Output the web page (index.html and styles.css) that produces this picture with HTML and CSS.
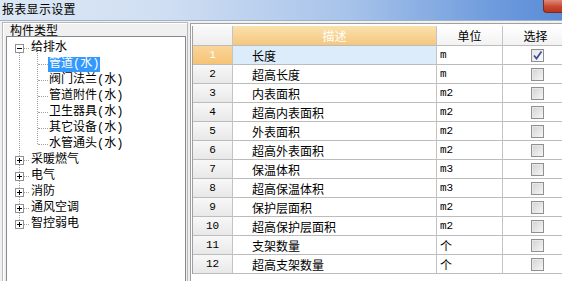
FILE: index.html
```html
<!DOCTYPE html>
<html lang="zh-CN">
<head>
<meta charset="utf-8">
<title>报表显示设置</title>
<link rel="stylesheet" href="styles.css">
</head>
<body>
<div class="window">
  <div class="titlebar">
    <span class="title">报表显示设置</span>
    <span class="close"></span>
  </div>
  <div class="main">
    <div class="left">
      <div class="group">
        <div class="group-title">构件类型</div>
        <div class="tree">
          <ul class="root">
            <li class="node">
              <div class="row">
                <svg class="exp" width="9" height="9" viewBox="0 0 9 9"><rect x="0.5" y="0.5" width="8" height="8" fill="#fff" stroke="#919191"/><path d="M2 4.5h5" stroke="#000"/></svg>
                <span class="hl"></span><span class="label">给排水</span>
              </div>
              <ul class="children">
                <li class="row"><span class="chl"></span><span class="label selected">管道(水)</span></li>
                <li class="row"><span class="chl"></span><span class="label">阀门法兰(水)</span></li>
                <li class="row"><span class="chl"></span><span class="label">管道附件(水)</span></li>
                <li class="row"><span class="chl"></span><span class="label">卫生器具(水)</span></li>
                <li class="row"><span class="chl"></span><span class="label">其它设备(水)</span></li>
                <li class="row"><span class="chl"></span><span class="label">水管通头(水)</span></li>
              </ul>
            </li>
            <li class="row">
              <svg class="exp" width="9" height="9" viewBox="0 0 9 9"><rect x="0.5" y="0.5" width="8" height="8" fill="#fff" stroke="#919191"/><path d="M2 4.5h5M4.5 2v5" stroke="#000"/></svg>
              <span class="hl"></span><span class="label">采暖燃气</span>
            </li>
            <li class="row">
              <svg class="exp" width="9" height="9" viewBox="0 0 9 9"><rect x="0.5" y="0.5" width="8" height="8" fill="#fff" stroke="#919191"/><path d="M2 4.5h5M4.5 2v5" stroke="#000"/></svg>
              <span class="hl"></span><span class="label">电气</span>
            </li>
            <li class="row">
              <svg class="exp" width="9" height="9" viewBox="0 0 9 9"><rect x="0.5" y="0.5" width="8" height="8" fill="#fff" stroke="#919191"/><path d="M2 4.5h5M4.5 2v5" stroke="#000"/></svg>
              <span class="hl"></span><span class="label">消防</span>
            </li>
            <li class="row">
              <svg class="exp" width="9" height="9" viewBox="0 0 9 9"><rect x="0.5" y="0.5" width="8" height="8" fill="#fff" stroke="#919191"/><path d="M2 4.5h5M4.5 2v5" stroke="#000"/></svg>
              <span class="hl"></span><span class="label">通风空调</span>
            </li>
            <li class="row">
              <svg class="exp" width="9" height="9" viewBox="0 0 9 9"><rect x="0.5" y="0.5" width="8" height="8" fill="#fff" stroke="#919191"/><path d="M2 4.5h5M4.5 2v5" stroke="#000"/></svg>
              <span class="hl"></span><span class="label">智控弱电</span>
            </li>
          </ul>
        </div>
      </div>
    </div>
    <div class="right">
      <div class="grid">
        <div class="grow head">
          <div class="c num"></div>
          <div class="c desc active">描述</div>
          <div class="c unit">单位</div>
          <div class="c sel">选择</div>
        </div>
        <div class="grow current">
          <div class="c num">1</div><div class="c desc">长度</div><div class="c unit">m</div>
          <div class="c sel"><span class="cb on"><svg width="11" height="11" viewBox="0 0 11 11"><path d="M2 5.5l2.5 3L9.5 1.5" fill="none" stroke="#3b4c9c" stroke-width="1.7"/></svg></span></div>
        </div>
        <div class="grow"><div class="c num">2</div><div class="c desc">超高长度</div><div class="c unit">m</div><div class="c sel"><span class="cb"></span></div></div>
        <div class="grow"><div class="c num">3</div><div class="c desc">内表面积</div><div class="c unit">m2</div><div class="c sel"><span class="cb"></span></div></div>
        <div class="grow"><div class="c num">4</div><div class="c desc">超高内表面积</div><div class="c unit">m2</div><div class="c sel"><span class="cb"></span></div></div>
        <div class="grow"><div class="c num">5</div><div class="c desc">外表面积</div><div class="c unit">m2</div><div class="c sel"><span class="cb"></span></div></div>
        <div class="grow"><div class="c num">6</div><div class="c desc">超高外表面积</div><div class="c unit">m2</div><div class="c sel"><span class="cb"></span></div></div>
        <div class="grow"><div class="c num">7</div><div class="c desc">保温体积</div><div class="c unit">m3</div><div class="c sel"><span class="cb"></span></div></div>
        <div class="grow"><div class="c num">8</div><div class="c desc">超高保温体积</div><div class="c unit">m3</div><div class="c sel"><span class="cb"></span></div></div>
        <div class="grow"><div class="c num">9</div><div class="c desc">保护层面积</div><div class="c unit">m2</div><div class="c sel"><span class="cb"></span></div></div>
        <div class="grow"><div class="c num">10</div><div class="c desc">超高保护层面积</div><div class="c unit">m2</div><div class="c sel"><span class="cb"></span></div></div>
        <div class="grow"><div class="c num">11</div><div class="c desc">支架数量</div><div class="c unit cjk">个</div><div class="c sel"><span class="cb"></span></div></div>
        <div class="grow"><div class="c num">12</div><div class="c desc">超高支架数量</div><div class="c unit cjk">个</div><div class="c sel"><span class="cb"></span></div></div>
      </div>
    </div>
  </div>
</div>
</body>
</html>
```

FILE: styles.css
```css
* { box-sizing: border-box; }
html, body { margin: 0; padding: 0; }
body {
  width: 562px;
  height: 281px;
  overflow: hidden;
  background: #f0f0f0;
  font-family: "Noto Sans CJK SC", "Noto Sans", sans-serif;
  font-size: 12px;
  color: #000;
}
.window { width: 562px; height: 281px; display: flex; flex-direction: column; }

.titlebar {
  height: 21px;
  flex: none;
  display: flex;
  justify-content: space-between;
  align-items: flex-start;
  background: linear-gradient(to right, #dde8f5 0%, #cfdef2 30%, #a7c3ea 62%, #6e9bdd 88%, #5a8bd8 100%);
  border-bottom: 1px solid #9fb3cc;
}
.title {
  padding-left: 2px;
  line-height: 18px;
  font-size: 12px;
  letter-spacing: 0.3px;
  color: #000;
}
.close {
  width: 19px;
  height: 13px;
  background: linear-gradient(#e08a78, #c7482f 55%, #b8341e);
  border-left: 1px solid #7a2b1f;
  border-bottom: 1px solid #7a2b1f;
  border-bottom-left-radius: 4px;
}

.main { flex: 1; display: flex; min-height: 0; }

.left { width: 190px; flex: none; display: flex; padding: 1px 0 0 2px; }
.group {
  width: 186px;
  display: flex;
  flex-direction: column;
  border: 1px solid #b9b9b9;
  border-bottom: none;
  box-shadow: inset 1px 1px 0 #fff;
}
.group-title {
  height: 13px;
  line-height: 13px;
  padding-left: 7px;
  flex: none;
}
.tree {
  flex: 1;
  margin-left: 3px;
  width: 180px;
  background: #fff;
  border: 1px solid #828790;
  border-bottom: none;
  padding-top: 3px;
}
.tree ul { list-style: none; margin: 0; padding: 0; }
.root { position: relative; }
.root::before {
  content: "";
  position: absolute;
  left: 12px;
  top: 12px;
  bottom: 8px;
  border-left: 1px dotted #a0a0a0;
}
.row {
  height: 16px;
  display: flex;
  align-items: center;
}
.exp { margin-left: 8px; flex: none; position: relative; z-index: 1; display: block; }
.hl { width: 5px; border-top: 1px dotted #a0a0a0; flex: none; }
.label {
  margin-left: 1px;
  padding: 0 1px;
  height: 15px;
  line-height: 15px;
  white-space: nowrap;
  font-family: "Liberation Mono", "Noto Sans CJK SC", monospace;
  font-size: 12px;
}
.children { position: relative; }
.children::before {
  content: "";
  position: absolute;
  left: 30px;
  top: -3px;
  bottom: 8px;
  border-left: 1px dotted #a0a0a0;
}
.chl { width: 10px; margin-left: 31px; border-top: 1px dotted #a0a0a0; flex: none; }
.children .label { margin-left: 0; }
.label.selected { background: #3399ff; color: #fff; }

.right {
  flex: 1;
  min-width: 0;
  overflow: hidden;
  margin-top: 2px;
  border-top: 1px solid #a0a0a0;
  border-left: 1px solid #a0a0a0;
  background: #fff;
  padding: 2px 0 0 1px;
}
.grid {
  width: 380px;
  border-left: 1px solid #a0a0a0;
}
.grow {
  display: grid;
  grid-template-columns: 40px 204px 66px 66px;
  height: 19px;
}
.grow.head { height: 20px; }
.c {
  border-right: 1px solid #c4c4c4;
  border-bottom: 1px solid #bcbcbc;
  display: flex;
  align-items: center;
  white-space: nowrap;
  overflow: hidden;
}
.c.num {
  justify-content: center;
  font-family: "Liberation Mono", monospace;
  font-size: 11px;
  background: linear-gradient(#f8f8f8, #e8e8e8);
}
.c.desc { padding-left: 19px; }
.c.unit {
  padding-left: 3px;
  font-family: "Liberation Mono", monospace;
  font-size: 11px;
}
.c.unit.cjk { font-family: "Noto Sans CJK SC", sans-serif; font-size: 12px; }
.c.sel { padding-left: 28px; }

.head .c { justify-content: center; padding-left: 0; font-family: "Noto Sans CJK SC", sans-serif; font-size: 12px; background: linear-gradient(#ffffff, #f2f2f2); }
.head .c.num { background: linear-gradient(#fafafa, #ededed); }
.head .c.active { background: linear-gradient(#fbe1ae, #f5c77d); color: #fff; }

.current .c.num { background: linear-gradient(#fad59a, #f6c374); color: #fff; }
.current .c.desc { background: #ddecfb; }

.cb {
  width: 13px;
  height: 13px;
  border: 1px solid #8f9090;
  background: linear-gradient(135deg, #d2d2d2, #f6f6f6);
  box-shadow: inset 1px 1px 0 #e8e8e8;
  display: flex;
  align-items: center;
  justify-content: center;
}
.cb.on { background: linear-gradient(135deg, #e4e4e4, #fbfbfb); }
.cb svg { display: block; }
```
